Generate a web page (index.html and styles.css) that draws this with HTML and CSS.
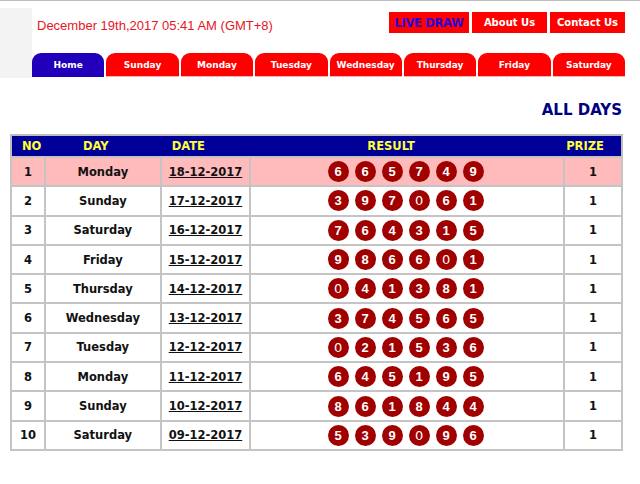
FILE: index.html
```html
<!DOCTYPE html>
<html>
<head>
<meta charset="utf-8">
<link rel="stylesheet" href="styles.css">
</head>
<body>
<div class="topline"></div>
<div class="header">
  <div class="side"></div>
  <div class="head-main">
    <div class="head-top">
      <div class="clock">December 19th,2017 05:41 AM (GMT+8)</div>
      <div class="links">
        <a class="btn live">LIVE DRAW</a>
        <a class="btn">About Us</a>
        <a class="btn">Contact Us</a>
      </div>
    </div>
    <nav class="tabs">
      <a class="tab active">Home</a>
      <a class="tab">Sunday</a>
      <a class="tab">Monday</a>
      <a class="tab">Tuesday</a>
      <a class="tab">Wednesday</a>
      <a class="tab">Thursday</a>
      <a class="tab">Friday</a>
      <a class="tab">Saturday</a>
    </nav>
  </div>
</div>
<h2 class="title">ALL DAYS</h2>
<table class="results">
  <colgroup>
    <col class="c-no"><col class="c-day"><col class="c-date"><col class="c-res"><col class="c-prize">
  </colgroup>
  <thead>
    <tr>
      <th class="h-no">NO</th>
      <th class="h-day">DAY</th>
      <th class="h-date">DATE</th>
      <th class="h-res">RESULT</th>
      <th class="h-prize">PRIZE</th>
    </tr>
  </thead>
  <tbody>
    <tr class="hl"><td>1</td><td>Monday</td><td><a class="date">18-12-2017</a></td><td><div class="balls"><span class="ball">6</span><span class="ball">6</span><span class="ball">5</span><span class="ball">7</span><span class="ball">4</span><span class="ball">9</span></div></td><td>1</td></tr>
    <tr><td>2</td><td>Sunday</td><td><a class="date">17-12-2017</a></td><td><div class="balls"><span class="ball">3</span><span class="ball">9</span><span class="ball">7</span><span class="ball zero">0</span><span class="ball">6</span><span class="ball">1</span></div></td><td>1</td></tr>
    <tr><td>3</td><td>Saturday</td><td><a class="date">16-12-2017</a></td><td><div class="balls"><span class="ball">7</span><span class="ball">6</span><span class="ball">4</span><span class="ball">3</span><span class="ball">1</span><span class="ball">5</span></div></td><td>1</td></tr>
    <tr><td>4</td><td>Friday</td><td><a class="date">15-12-2017</a></td><td><div class="balls"><span class="ball">9</span><span class="ball">8</span><span class="ball">6</span><span class="ball">6</span><span class="ball zero">0</span><span class="ball">1</span></div></td><td>1</td></tr>
    <tr><td>5</td><td>Thursday</td><td><a class="date">14-12-2017</a></td><td><div class="balls"><span class="ball zero">0</span><span class="ball">4</span><span class="ball">1</span><span class="ball">3</span><span class="ball">8</span><span class="ball">1</span></div></td><td>1</td></tr>
    <tr><td>6</td><td>Wednesday</td><td><a class="date">13-12-2017</a></td><td><div class="balls"><span class="ball">3</span><span class="ball">7</span><span class="ball">4</span><span class="ball">5</span><span class="ball">6</span><span class="ball">5</span></div></td><td>1</td></tr>
    <tr><td>7</td><td>Tuesday</td><td><a class="date">12-12-2017</a></td><td><div class="balls"><span class="ball zero">0</span><span class="ball">2</span><span class="ball">1</span><span class="ball">5</span><span class="ball">3</span><span class="ball">6</span></div></td><td>1</td></tr>
    <tr><td>8</td><td>Monday</td><td><a class="date">11-12-2017</a></td><td><div class="balls"><span class="ball">6</span><span class="ball">4</span><span class="ball">5</span><span class="ball">1</span><span class="ball">9</span><span class="ball">5</span></div></td><td>1</td></tr>
    <tr><td>9</td><td>Sunday</td><td><a class="date">10-12-2017</a></td><td><div class="balls"><span class="ball">8</span><span class="ball">6</span><span class="ball">1</span><span class="ball">8</span><span class="ball">4</span><span class="ball">4</span></div></td><td>1</td></tr>
    <tr><td>10</td><td>Saturday</td><td><a class="date">09-12-2017</a></td><td><div class="balls"><span class="ball">5</span><span class="ball">3</span><span class="ball">9</span><span class="ball zero">0</span><span class="ball">9</span><span class="ball">6</span></div></td><td>1</td></tr>
  </tbody>
</table>
</body>
</html>
```

FILE: styles.css
```css
html, body {
  margin: 0;
  padding: 0;
  background: #ffffff;
}
body {
  font-family: "DejaVu Sans", Verdana, sans-serif;
  color: #111111;
}
.topline {
  height: 1px;
  background: #bdbdbd;
}
.header {
  display: flex;
  padding-top: 7px;
}
.side {
  width: 32px;
  height: 70px;
  background: #f3f3f3;
}
.head-main {
  width: 593px;
}
.head-top {
  display: flex;
  justify-content: space-between;
  align-items: flex-start;
  height: 45px;
}
.clock {
  font-family: "Liberation Sans", Arial, sans-serif;
  font-size: 13px;
  color: #e8141e;
  padding-left: 5px;
  padding-top: 10px;
}
.links {
  display: flex;
  gap: 3px;
  padding-top: 4px;
}
.btn {
  display: flex;
  align-items: center;
  justify-content: center;
  width: 75px;
  height: 21px;
  background: #ff0000;
  color: #ffffff;
  font-weight: bold;
  font-size: 10px;
}
.btn.live {
  width: 80px;
  color: #2a00d6;
  font-size: 11.5px;
  letter-spacing: -0.3px;
}
.tabs {
  display: flex;
  gap: 2px;
  height: 24px;
}
.tab {
  flex: 1;
  display: flex;
  align-items: center;
  justify-content: center;
  background: #ff0000;
  color: #ffffff;
  font-weight: bold;
  font-size: 9px;
  border-radius: 9px 9px 0 0;
  border-bottom: 1px solid #f7b0b0;
}
.tab.active {
  background: #2200bb;
  border-bottom-color: #2200bb;
}
.title {
  margin: 0;
  width: 622px;
  text-align: right;
  font-size: 15px;
  font-weight: bold;
  color: #000080;
  padding-top: 22px;
  height: 34px;
  box-sizing: border-box;
  line-height: 20px;
  margin-bottom: 22px;
}
.results {
  margin-left: 10px;
  width: 613px;
  border-collapse: collapse;
  border: 2px solid #bdbdbd;
}
.c-no { width: 34px; }
.c-day { width: 116px; }
.c-date { width: 90px; }
.c-res { width: 315px; }
.c-prize { width: 58px; }
.results th {
  background: #000099;
  color: #ffff33;
  font-size: 11.5px;
  font-weight: bold;
  text-align: left;
  height: 20px;
  padding: 0;
  border: none;
}
.h-no { padding-left: 10px !important; }
.h-day { padding-left: 38px !important; }
.h-date { padding-left: 11px !important; }
.h-res { padding-left: 117px !important; }
.h-prize { padding-left: 2px !important; }
.results td {
  border: 2px solid #c4c4c4;
  height: 27.3px;
  padding: 0;
  text-align: center;
  font-size: 11.5px;
  font-weight: bold;
}
.results tr.hl td {
  background: #ffbbbb;
}
.date {
  text-decoration: underline;
  color: #111111;
}
.balls {
  display: flex;
  justify-content: center;
  gap: 6px;
  padding-right: 3px;
}
.ball {
  display: flex;
  align-items: center;
  justify-content: center;
  width: 21px;
  height: 21px;
  border-radius: 50%;
  background: #a00000;
  color: #ffffff;
  font-family: "Liberation Sans", Arial, sans-serif;
  font-size: 13px;
  font-weight: bold;
}
.ball.zero {
  font-weight: normal;
  font-family: "DejaVu Sans", sans-serif;
}
```
